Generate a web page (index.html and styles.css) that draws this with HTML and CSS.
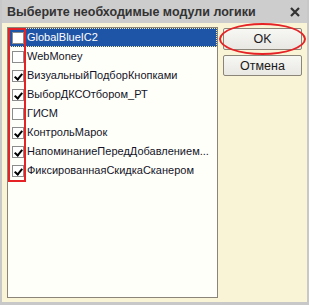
FILE: index.html
```html
<!DOCTYPE html>
<html>
<head>
<meta charset="utf-8">
<link rel="stylesheet" href="styles.css">
</head>
<body>
<div class="window">
  <div class="titlebar">
    <span class="title">Выберите необходимые модули логики</span>
    <svg class="close" width="10" height="10" viewBox="0 0 10 10"><path d="M1 1 L9 9 M9 1 L1 9" stroke="#333" stroke-width="2.2" fill="none"/></svg>
  </div>
  <div class="body">
    <div class="list">
      <div class="row selected"><span class="cb"></span><span class="label">GlobalBlueIC2</span></div>
      <div class="row"><span class="cb"></span><span class="label">WebMoney</span></div>
      <div class="row"><span class="cb checked"></span><span class="label">ВизуальныйПодборКнопками</span></div>
      <div class="row"><span class="cb checked"></span><span class="label">ВыборДКСОтбором_РТ</span></div>
      <div class="row"><span class="cb"></span><span class="label">ГИСМ</span></div>
      <div class="row"><span class="cb checked"></span><span class="label">КонтрольМарок</span></div>
      <div class="row"><span class="cb checked"></span><span class="label">НапоминаниеПередДобавлением...</span></div>
      <div class="row"><span class="cb checked"></span><span class="label">ФиксированнаяСкидкаСканером</span></div>
      <div class="annot-rect"></div>
    </div>
    <div class="buttons">
      <div class="btn-wrap">
        <button class="btn ok">OK</button>
        <div class="annot-ellipse"></div>
      </div>
      <button class="btn">Отмена</button>
    </div>
  </div>
</div>
</body>
</html>
```

FILE: styles.css
```css
* { box-sizing: border-box; }
html, body { margin: 0; padding: 0; }
body {
  font-family: "Liberation Sans", Arial, sans-serif;
  width: 309px;
  height: 305px;
  overflow: hidden;
  background: #c8c8c8;
}
.window {
  width: 309px;
  height: 305px;
  background: #c8c8c8;
  padding: 0 2px 3px 2px;
  display: flex;
  flex-direction: column;
}
.titlebar {
  height: 23px;
  flex: none;
  display: flex;
  align-items: center;
  justify-content: space-between;
  padding: 0 7px 0 5px;
  background: #cdcdcd;
}
.title {
  font-weight: bold;
  font-size: 12.5px;
  color: #333;
}
.close { display: block; margin-top: 1px; }
.body {
  flex: 1;
  background: #faf4d6;
  padding: 4px 5px 4px 5px;
  display: flex;
  gap: 5px;
}
.list {
  position: relative;
  width: 211px;
  background: #fffffa;
  border: 1px solid #8a8578;
}
.row {
  height: 19px;
  display: flex;
  align-items: center;
  font-size: 11px;
  color: #141428;
  white-space: nowrap;
}
.row.selected {
  background: #1f55a6;
  color: #fff;
  outline: 1px dotted #f5e9a0;
  outline-offset: -1px;
}
.cb {
  width: 12px;
  height: 12px;
  margin-left: 4px;
  margin-right: 3px;
  background: #fff;
  border: 1px solid #8c8c8c;
  position: relative;
  flex: none;
}
.cb.checked::after {
  content: "";
  position: absolute;
  left: 3px;
  top: 1px;
  width: 3px;
  height: 6px;
  border-right: 2px solid #000;
  border-bottom: 2px solid #000;
  transform: rotate(40deg);
}
.label { line-height: 19px; }
.annot-rect {
  position: absolute;
  left: 0;
  top: 0;
  width: 18px;
  height: 154px;
  border: 2px solid #e52326;
}
.buttons {
  flex: 1;
  display: flex;
  flex-direction: column;
  gap: 5px;
  padding-top: 1px;
}
.btn-wrap { position: relative; }
.btn {
  display: block;
  width: 79px;
  height: 21px;
  border: 1px solid #8a8578;
  border-radius: 2px;
  background: linear-gradient(#f7f7f4, #e9e8e3);
  font-family: "Liberation Sans", Arial, sans-serif;
  font-size: 12.5px;
  color: #1a1a1a;
  padding: 0;
}
.btn.ok { height: 22px; }
.annot-ellipse {
  position: absolute;
  left: -4px;
  top: -5px;
  width: 87px;
  height: 32px;
  border: 2px solid #e52326;
  border-radius: 50%;
}
```
